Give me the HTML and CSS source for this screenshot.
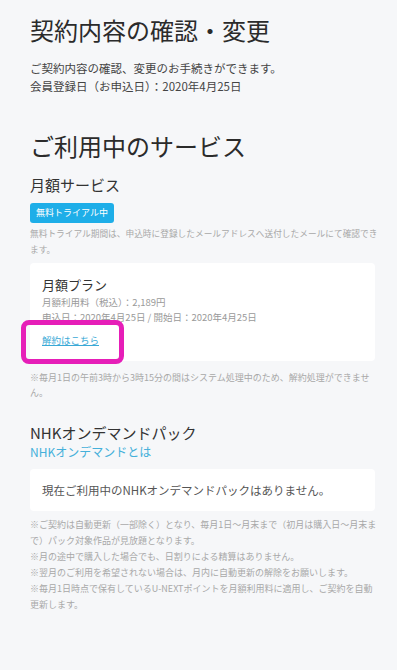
FILE: index.html
```html
<!DOCTYPE html>
<html lang="ja">
<head>
    <meta charset="UTF-8">
    <meta name="viewport" content="width=device-width, initial-scale=1.0">
    <title>契約内容の確認・変更</title>
    <link rel="stylesheet" href="styles.css">
</head>
<body>
    <main class="page">
        <h1 class="page-title">契約内容の確認・変更</h1>
        <p class="lead">ご契約内容の確認、変更のお手続きができます。<br>会員登録日（お申込日）：2020年4月25日</p>

        <h2 class="section-title">ご利用中のサービス</h2>

        <h3 class="sub-title">月額サービス</h3>
        <span class="badge">無料トライアル中</span>
        <p class="note note-trial">無料トライアル期間は、申込時に登録したメールアドレスへ送付したメールにて確認できます。</p>

        <div class="card plan-card">
            <p class="plan-name">月額プラン</p>
            <p class="plan-info">月額利用料（税込）：2,189円<br>申込日：2020年4月25日 / 開始日：2020年4月25日</p>
            <a class="cancel-link" href="#">解約はこちら</a>
            <span class="highlight"></span>
        </div>
        <p class="note note-cancel">※毎月1日の午前3時から3時15分の間はシステム処理中のため、解約処理ができません。</p>

        <h3 class="sub-title nhk-title">NHKオンデマンドパック</h3>
        <a class="nhk-link" href="#">NHKオンデマンドとは</a>

        <div class="card empty-card">
            <p class="empty-text">現在ご利用中のNHKオンデマンドパックはありません。</p>
        </div>

        <p class="note note-list">※ご契約は自動更新（一部除く）となり、毎月1日～月末まで（初月は購入日～月末まで）パック対象作品が見放題となります。<br>※月の途中で購入した場合でも、日割りによる精算はありません。<br>※翌月のご利用を希望されない場合は、月内に自動更新の解除をお願いします。<br>※毎月1日時点で保有しているU-NEXTポイントを月額利用料に適用し、ご契約を自動更新します。</p>
    </main>
</body>
</html>
```

FILE: styles.css
```css
body {
    margin: 0;
    background: #f6f7f9;
    font-family: "Noto Sans CJK JP", "Noto Sans", sans-serif;
    color: #333;
}
p, h1, h2, h3 {
    margin: 0;
    font-weight: normal;
}
.page {
    padding: 14px 16px 40px 30px;
}
.page-title {
    font-size: 24px;
    line-height: 32px;
    color: #2b2b2b;
}
.lead {
    margin-top: 13px;
    font-size: 11.5px;
    line-height: 18px;
    color: #444;
}
.section-title {
    margin-top: 35px;
    font-size: 24px;
    line-height: 32px;
    color: #2b2b2b;
}
.sub-title {
    margin-top: 13px;
    font-size: 15px;
    line-height: 20px;
    color: #333;
}
.badge {
    display: inline-block;
    margin-top: 8px;
    padding: 0 6px;
    height: 20px;
    line-height: 20px;
    font-size: 9px;
    color: #fff;
    background: #1eaee8;
    border-radius: 3px;
}
.note {
    font-size: 9px;
    line-height: 16px;
    color: #a8a8a8;
}
.note-trial {
    margin-top: 3px;
    font-size: 8.7px;
}
.card {
    position: relative;
    margin-right: 6px;
    background: #fff;
    border-radius: 4px;
    padding: 12px 12px;
}
.plan-card {
    margin-top: 5px;
}
.plan-name {
    font-size: 13px;
    line-height: 20px;
    color: #333;
}
.plan-info {
    font-size: 9.5px;
    line-height: 15px;
    color: #9a9a9a;
}
.cancel-link {
    display: inline-block;
    margin-top: 7px;
    font-size: 9.5px;
    line-height: 16px;
    color: #3aa9d6;
}
.highlight {
    position: absolute;
    left: -9px;
    top: 57px;
    width: 103px;
    height: 44px;
    box-sizing: border-box;
    border: 5px solid #e61eb8;
    border-radius: 8px;
}
.note-cancel {
    margin-top: 9px;
    line-height: 15px;
}
.nhk-title {
    margin-top: 23px;
}
.nhk-link {
    display: block;
    font-size: 12px;
    line-height: 18px;
    color: #45b0da;
    text-decoration: none;
}
.empty-card {
    margin-top: 8px;
}
.empty-text {
    font-size: 11.5px;
    line-height: 18px;
    color: #555;
}
.note-list {
    margin-top: 6px;
}
```
